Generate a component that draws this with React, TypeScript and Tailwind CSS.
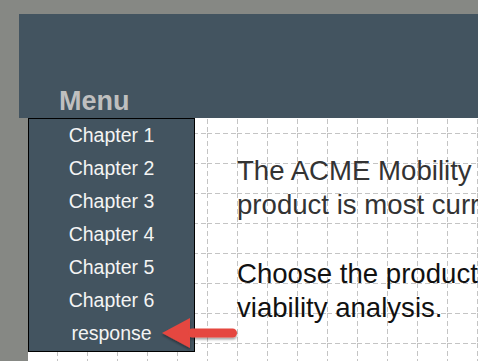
const CHAPTERS = ['Chapter 1', 'Chapter 2', 'Chapter 3', 'Chapter 4', 'Chapter 5', 'Chapter 6', 'response']

function GridBackdrop() {
  return (
    <svg className="absolute inset-0 h-full w-full" aria-hidden="true">
      <defs>
        <pattern id="grid" x="-1" y="15" width="30" height="30" patternUnits="userSpaceOnUse">
          <line x1="0.5" y1="0" x2="0.5" y2="30" stroke="#c4c4c4" strokeWidth="1" strokeDasharray="5 3" />
          <line x1="0" y1="0.5" x2="30" y2="0.5" stroke="#c4c4c4" strokeWidth="1" strokeDasharray="5 3" />
        </pattern>
      </defs>
      <rect width="100%" height="100%" fill="url(#grid)" />
    </svg>
  )
}

function PointerArrow() {
  return (
    <svg
      className="absolute left-[130px] top-[196px]"
      width="84"
      height="40"
      viewBox="0 0 84 40"
      aria-hidden="true"
    >
      <defs>
        <filter id="arrowShadow" x="-20%" y="-20%" width="140%" height="160%">
          <feDropShadow dx="0" dy="2" stdDeviation="1.2" floodColor="#000" floodOpacity="0.35" />
        </filter>
      </defs>
      <g filter="url(#arrowShadow)" fill="#e5473f">
        <polygon points="4,19 32,4 32,34" />
        <rect x="30" y="14.5" width="49" height="9" rx="4.5" />
      </g>
    </svg>
  )
}

export default function App() {
  return (
    <div className="h-[361px] w-[478px] overflow-hidden bg-[#868884] font-['Liberation_Sans',Arial,sans-serif]">
      {/* Header */}
      <div className="ml-[19px] mt-[14px] flex h-[104px] items-end bg-[#435460] pb-[3px] pl-[40px]">
        <span className="text-[27px] font-bold leading-none text-[#bfbfbf]">Menu</span>
      </div>

      {/* Page */}
      <div className="relative ml-[28px] flex h-[243px] bg-white">
        <GridBackdrop />

        <nav className="relative flex h-[234px] w-[167px] shrink-0 flex-col border border-black bg-[#435460]">
          {CHAPTERS.map((c) => (
            <div
              key={c}
              className="flex h-[33px] items-center justify-center text-[19.5px] leading-none text-[#f4f4f4]"
            >
              {c}
            </div>
          ))}
        </nav>

        <div className="relative ml-[42px] mt-[36px] whitespace-nowrap text-[27.6px] leading-[34px]">
          <p className="text-[#333333]">
            The ACME Mobility team needs to know which
            <br />
            product is most currently viable in the market.
          </p>
          <p className="mt-[35px] text-[#111111]">
            Choose the product you want to include in the
            <br />
            viability analysis.
          </p>
        </div>

        <PointerArrow />
      </div>
    </div>
  )
}
